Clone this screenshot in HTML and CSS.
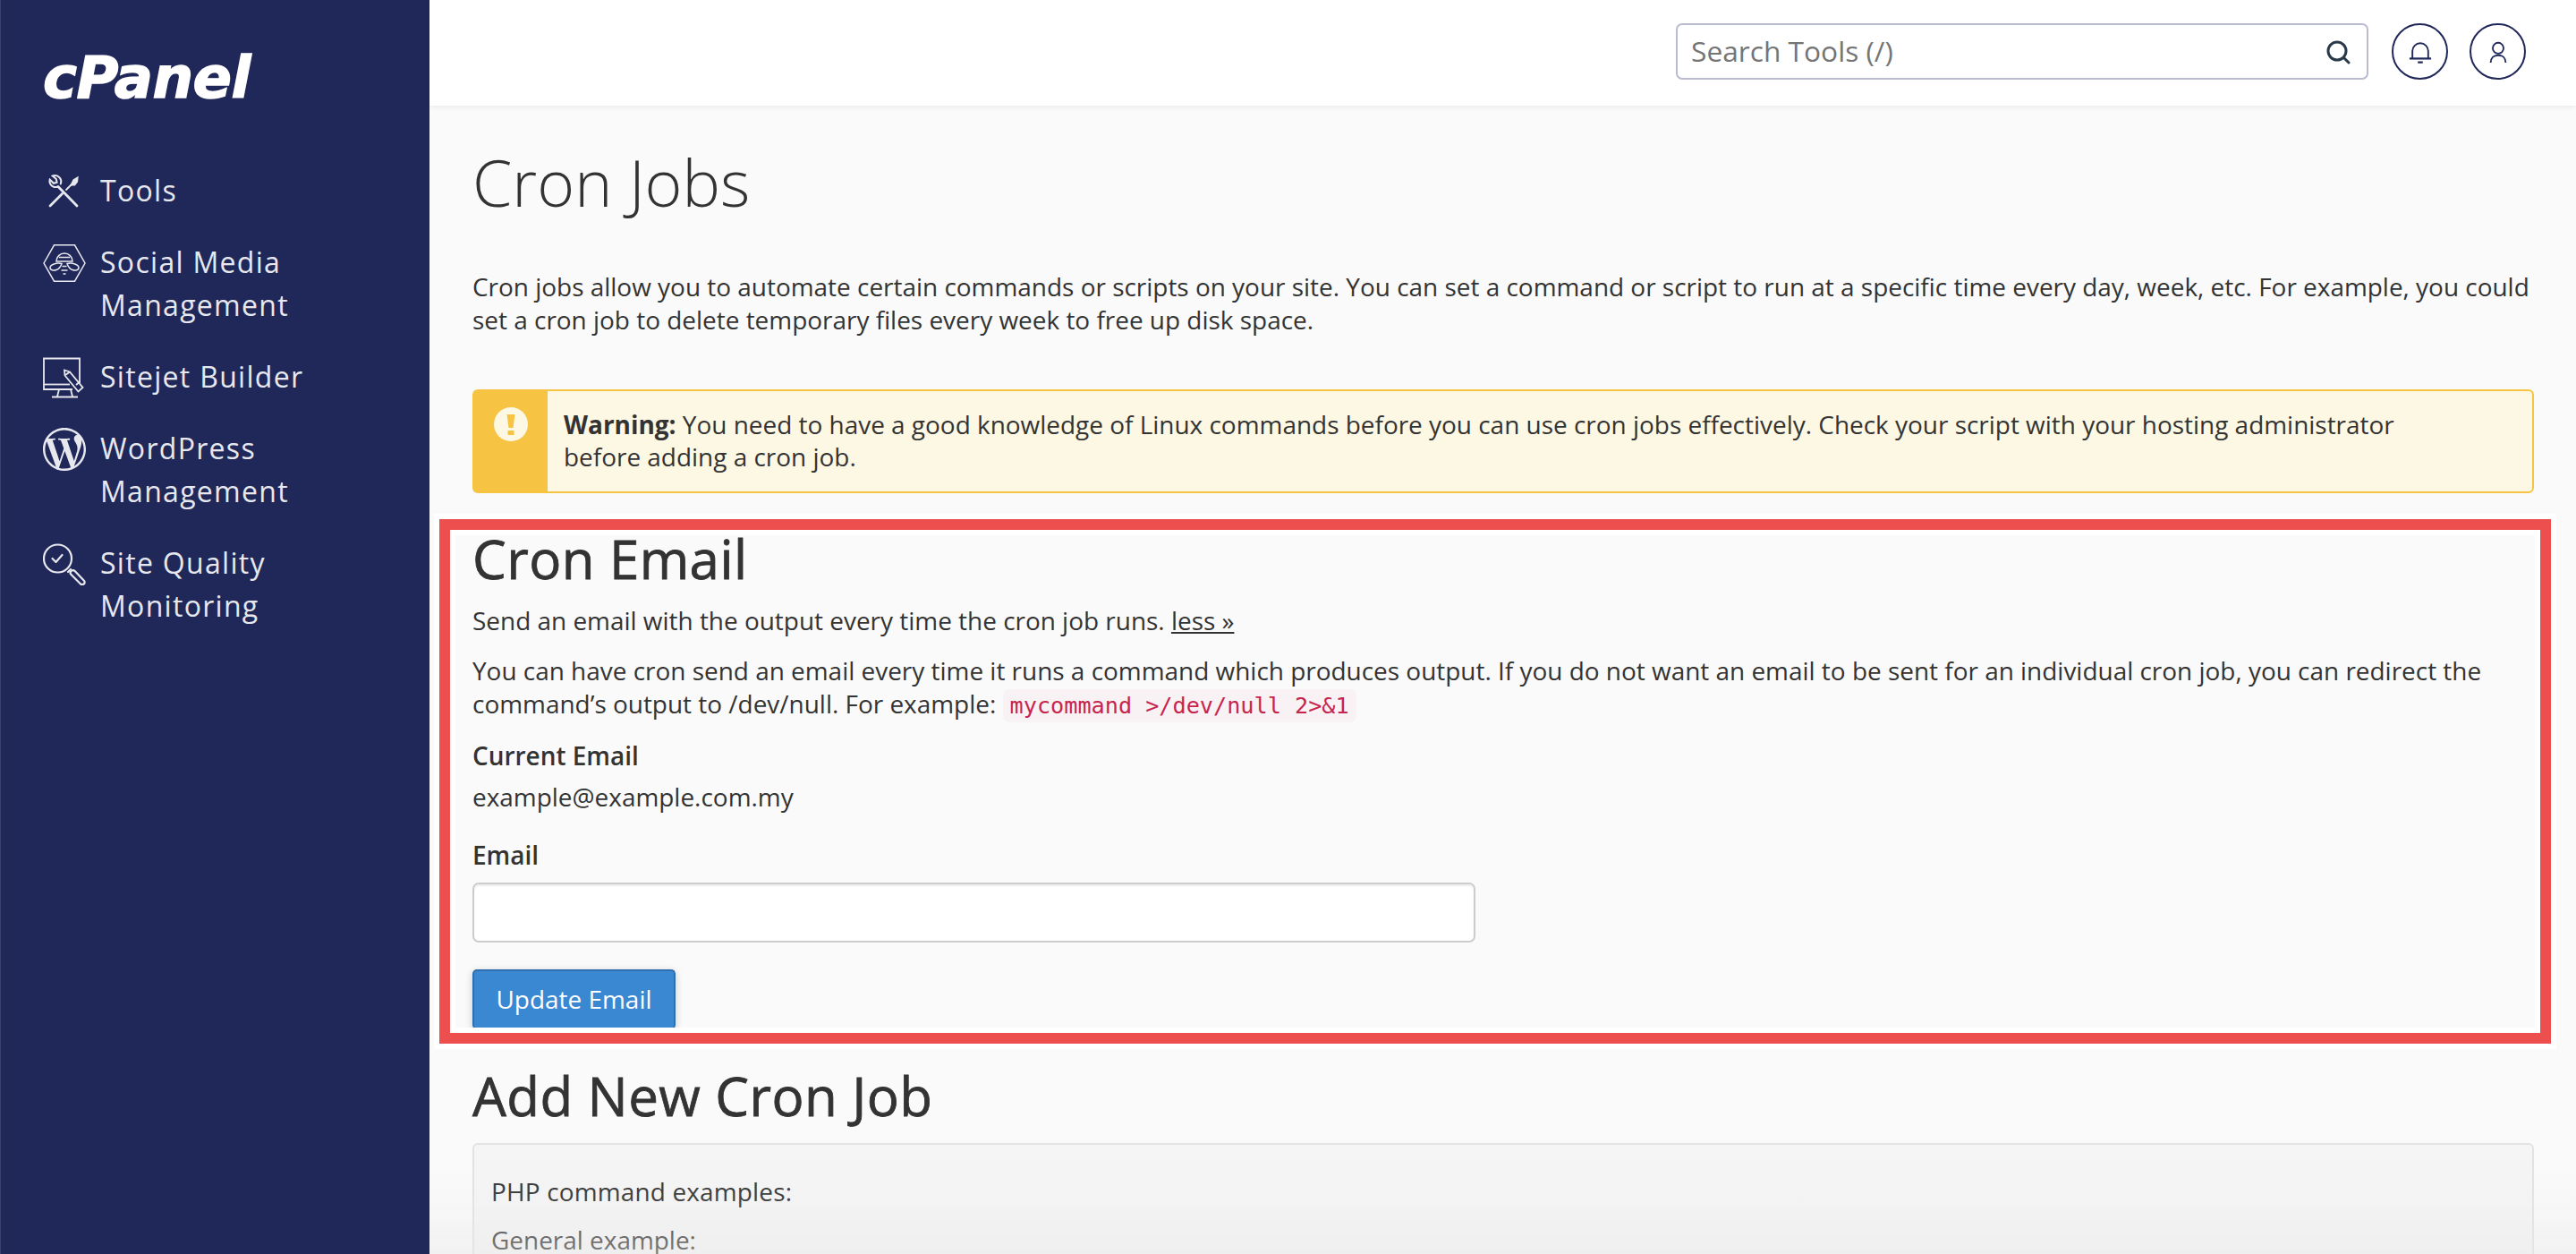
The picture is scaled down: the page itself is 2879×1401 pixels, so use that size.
FILE: index.html
```html
<!DOCTYPE html>
<html lang="en">
<head>
<meta charset="utf-8">
<title>Cron Jobs - cPanel</title>
<link rel="stylesheet" href="styles.css">
</head>
<body>
<div class="app">
  <aside class="sidebar">
    <div class="logo">cPanel</div>
    <nav class="nav">
      <a class="nav-item">
        <svg class="nav-icon" viewBox="0 0 48 48" fill="none" stroke="currentColor" stroke-width="2.800" stroke-linecap="round">
          <path d="M38 40 17 18.500"/>
          <path d="M16.500 18.500c-3.500 1.300-7-.2-8.500-3.500-.7-1.500-.8-3-.3-4.500l4.300 4.300 3.600-1-.8-3.800-4-3.500c2.800-1 6-.2 8 2.200 1.600 2 1.900 4.500 1 6.800" stroke-width="2"/>
          <path d="M8 40 21.500 26.500"/>
          <path d="M26 22 31.500 16.500" stroke-width="1.800"/>
          <path d="M31 17l3-6 5-3-.5 5-3 4z" fill="currentColor" stroke-width="1.200"/>
        </svg>
        <span>Tools</span>
      </a>
      <a class="nav-item">
        <svg class="nav-icon" viewBox="0 0 48 48" fill="none" stroke="currentColor" stroke-width="1.500">
          <path d="M1 24 12.500 3.800h23L47 24 35.500 44.200h-23z"/>
          <path d="M15 22c0-5 4-9 9-9s9 4 9 9zM18 17.500h12"/>
          <path d="M21 24.500C15 23 8 26 8 29s4 3.500 7 2.500c3-1 5-4 6-7z"/>
          <path d="M27 24.500C33 23 40 26 40 29s-4 3.500-7 2.500c-3-1-5-4-6-7z"/>
          <path d="M21.500 27.500h5M20.500 32h7M22.500 36h3"/>
        </svg>
        <span>Social Media<br>Management</span>
      </a>
      <a class="nav-item">
        <svg class="nav-icon" viewBox="0 0 48 48" fill="none" stroke="currentColor" stroke-width="1.800">
          <path d="M41 30V2.500H1V37h32"/>
          <path d="M1 31.500h29"/>
          <path d="M18 37l-2 8M31 37l2 8M10 45.500h29"/>
          <path d="M24 15.500l6 2 14.500 17.500-5 4.500L24.500 21.500z"/>
          <path d="M25 21l5-3.500M37 32l4.500-3.800"/>
        </svg>
        <span>Sitejet Builder</span>
      </a>
      <a class="nav-item">
        <svg class="nav-icon" viewBox="0 0 24 24" fill="currentColor">
          <path d="M21.469 6.825c.84 1.537 1.318 3.3 1.318 5.175 0 3.979-2.156 7.456-5.363 9.325l3.295-9.527c.615-1.54.82-2.771.82-3.864 0-.405-.026-.78-.07-1.11m-7.981.105c.647-.03 1.232-.105 1.232-.105.582-.075.514-.93-.067-.899 0 0-1.755.135-2.88.135-1.064 0-2.85-.15-2.85-.15-.585-.03-.661.855-.075.885 0 0 .54.061 1.125.09l1.68 4.605-2.37 7.08L5.354 6.9c.649-.03 1.234-.1 1.234-.1.585-.075.516-.93-.065-.896 0 0-1.746.138-2.874.138-.2 0-.438-.008-.69-.015C4.911 3.15 8.235 1.215 12 1.215c2.809 0 5.365 1.072 7.286 2.833-.046-.003-.091-.009-.141-.009-1.06 0-1.812.923-1.812 1.914 0 .89.513 1.643 1.06 2.531.411.72.89 1.643.89 2.977 0 .915-.354 1.994-.821 3.479l-1.075 3.585-3.9-11.61.001.014zM12 22.784c-1.059 0-2.081-.153-3.048-.437l3.237-9.406 3.315 9.087c.024.053.05.101.078.149-1.12.393-2.325.609-3.582.609M1.211 12c0-1.564.336-3.05.935-4.39L7.29 21.709C3.694 19.960 1.212 16.271 1.211 12M12 0C5.385 0 0 5.385 0 12s5.385 12 12 12 12-5.385 12-12S18.615 0 12 0"/>
        </svg>
        <span>WordPress<br>Management</span>
      </a>
      <a class="nav-item">
        <svg class="nav-icon" viewBox="0 0 48 48" fill="none" stroke="currentColor" stroke-width="2.200" stroke-linecap="round" stroke-linejoin="round">
          <circle cx="16.500" cy="18" r="15.500"/>
          <path d="M10.500 18l4 4 7-8"/>
          <path d="M28 33l3-3"/>
          <path d="M31.500 33.500c1.300-1.300 3-1.300 4.200 0l10 10.500c1.500 1.500 1 3.200-.1 4-1.200.9-2.800.8-4-.5l-10-10c-1.200-1.200-1.300-2.800-.1-4z" transform="translate(0 -1.500)"/>
        </svg>
        <span>Site Quality<br>Monitoring</span>
      </a>
    </nav>
  </aside>
  <div class="page">
    <header class="topbar">
      <div class="search">
        <span class="search-text">Search Tools (/)</span>
        <svg class="search-icon" viewBox="0 0 28 28" fill="none" stroke="currentColor" stroke-width="3" stroke-linecap="round">
          <circle cx="13" cy="13" r="10"/>
          <path d="M20.500 20.500 26 26"/>
        </svg>
      </div>
      <button class="circle-btn" type="button" aria-label="Notifications">
        <svg class="circle-icon" viewBox="0 0 28 28" fill="none" stroke="currentColor" stroke-width="2">
          <path d="M4.500 21.500V13a9.500 9.500 0 0 1 19 0v8.500"/>
          <path d="M1 22h26" stroke-width="2.400"/>
          <path d="M11 26.500h6" stroke-width="2.400"/>
        </svg>
      </button>
      <button class="circle-btn" type="button" aria-label="Account">
        <svg class="circle-icon" viewBox="0 0 28 28" fill="none" stroke="currentColor" stroke-width="2">
          <circle cx="14" cy="9.500" r="6.500"/>
          <path d="M5 27c0-5.500 3.500-9 9-9s9 3.500 9 9"/>
        </svg>
      </button>
    </header>
    <main class="content">
      <h1 class="page-title">Cron Jobs</h1>
      <p class="intro">Cron jobs allow you to automate certain commands or scripts on your site. You can set a command or script to run at a specific time every day, week, etc. For example, you could set a cron job to delete temporary files every week to free up disk space.</p>
      <div class="alert">
        <div class="alert-side">
          <svg class="alert-icon" viewBox="0 0 38 38">
            <circle class="alert-disc" cx="19" cy="19" r="19"/>
            <path class="alert-mark" d="M14.500 8h9l-2 15h-5zM15.500 26h7v5h-7z"/>
          </svg>
        </div>
        <div class="alert-body"><strong>Warning:</strong> You need to have a good knowledge of Linux commands before you can use cron jobs effectively. Check your script with your hosting administrator before adding a cron job.</div>
      </div>
      <section class="email-section">
        <h2 class="section-title">Cron Email</h2>
        <p class="lead">Send an email with the output every time the cron job runs. <a class="less">less »</a></p>
        <p class="detail">You can have cron send an email every time it runs a command which produces output. If you do not want an email to be sent for an individual cron job, you can redirect the command’s output to /dev/null. For example: <code class="code">mycommand &gt;/dev/null 2&gt;&amp;1</code></p>
        <div class="field-label">Current Email</div>
        <div class="current-value">example@example.com.my</div>
        <label class="field-label" for="email">Email</label>
        <input class="email-input" id="email" type="text">
        <button class="primary-btn" type="button">Update Email</button>
        <div class="annotation"></div>
      </section>
      <h2 class="section-title add-title">Add New Cron Job</h2>
      <div class="examples">
        <div class="examples-title">PHP command examples:</div>
        <div class="examples-sub">General example:</div>
      </div>
    </main>
  </div>
</div>
<div class="bottom-fade"></div>
</body>
</html>
```
FILE: styles.css
```css
* { box-sizing: border-box; }
html, body { margin: 0; height: 100%; overflow: hidden; }
body { font-family: "Open Sans", sans-serif; font-size: 27.950px; line-height: 36.500px; color: #333; background: #fafafa; }
.app { display: grid; grid-template-columns: 480px 1fr; height: 1401px; overflow: hidden; }

.sidebar { background: #20285a; border-left: 1px solid #3a416e; color: #e7e8ee; padding: 0 0 0 47px; }
.logo { height: 189px; padding-top: 47px; font-family: "DejaVu Sans", sans-serif; font-weight: 700; font-style: italic; font-size: 64px; line-height: 80px; letter-spacing: -.5px; color: #fff; -webkit-text-stroke: 1.500px #fff; }
.nav { display: flex; flex-direction: column; gap: 32px; }
.nav-item { display: flex; gap: 16px; font-size: 32px; line-height: 48px; letter-spacing: 1.300px; }
.nav-icon { flex: none; width: 48px; height: 48px; margin: 1px 0 -1px; }

.page { min-width: 0; display: flex; flex-direction: column; }
.topbar { flex: none; height: 118px; background: #fff; box-shadow: 0 2px 6px rgba(0, 0, 0, .06); display: flex; align-items: flex-start; padding: 26px 56px 0 0; justify-content: flex-end; gap: 24px; position: relative; }
.search { width: 774px; height: 63px; border: 2px solid #b9bbd0; border-radius: 7px; display: flex; align-items: center; justify-content: space-between; padding: 0 18px 0 15px; margin-right: 2px; }
.search-text { font-size: 31.700px; color: #757575; }
.search-icon { width: 28px; height: 28px; color: #293a4a; }
.circle-btn { width: 63px; height: 63px; border: 2px solid #20285a; border-radius: 50%; background: #fff; padding: 0; display: flex; align-items: center; justify-content: center; color: #20285a; }
.circle-icon { width: 26px; height: 26px; }

.content { padding: 0 47px 0 48px; }
.page-title { font-size: 71.500px; font-weight: 300; line-height: 80px; margin: 46px 0 0; }
.intro { margin: 58px 0 0; }
.alert { display: flex; margin-top: 60px; height: 116px; border: 2px solid #f7c343; border-radius: 6px; background: #fdf8e3; }
.alert-side { flex: none; width: 83px; background: #f7c343; display: flex; justify-content: center; padding-top: 18px; margin-left: -1px; }
.alert-icon { width: 38px; height: 38px; }
.alert-disc { fill: #fdf8e3; }
.alert-mark { fill: #f7c343; }
.alert-body { padding: 18.500px 80px 0 18px; }
.alert-body strong { font-weight: 700; }

.email-section { position: relative; margin-top: 40px; }
.section-title { font-size: 60px; font-weight: 500; line-height: 66px; margin: 0; letter-spacing: .42px; -webkit-text-stroke: .8px #333; }
.lead { margin: 18px 0 0; }
.less { text-decoration: underline; color: #333; }
.detail { margin: 19.500px 0 0; }
.code { font-family: "DejaVu Sans Mono", monospace; font-size: 25.200px; line-height: 1; color: #c7254e; background: #f9f2f4; border-radius: 7px; padding: 4px 8px; }
.field-label { display: block; font-weight: 600; margin-top: 21.500px; }
.current-value { margin-top: 9.500px; margin-bottom: 29px; }
.current-value + .field-label { margin-top: 0; }
.email-input { display: block; width: 1121px; height: 67px; margin-top: 12.500px; border: 2px solid #ccc; border-radius: 7px; background: #fff; box-shadow: inset 0 2px 2px rgba(0, 0, 0, .07); }
.primary-btn { display: block; margin-top: 30px; width: 227px; height: 67px; background: #3a87d2; border: 2px solid #2e6fb0; border-width: 2px 2px 0; border-radius: 5px; color: #fff; font: inherit; padding: 0 0 2px; box-shadow: 0 2px 8px rgba(0, 0, 0, .2); }
.annotation { position: absolute; left: -37px; right: -19px; top: -11px; height: 586px; border: 12px solid #ed4f4f; outline: 6px solid #fff; box-shadow: inset 0 0 0 6px #fff; pointer-events: none; }

.add-title { margin-top: 41px; }
.examples { margin-top: 20px; border: 2px solid #e3e3e3; border-radius: 6px; background: #f5f5f5; padding: 34px 19px; height: 300px; }
.examples-title { font-weight: 500; letter-spacing: .17px; }
.examples-sub { margin-top: 17px; }
.bottom-fade { position: fixed; left: 480px; right: 0; bottom: 0; height: 115px; background: linear-gradient(rgba(230, 230, 230, 0), rgba(230, 230, 230, .08) 45%, rgba(230, 230, 230, .42)); pointer-events: none; }
```
